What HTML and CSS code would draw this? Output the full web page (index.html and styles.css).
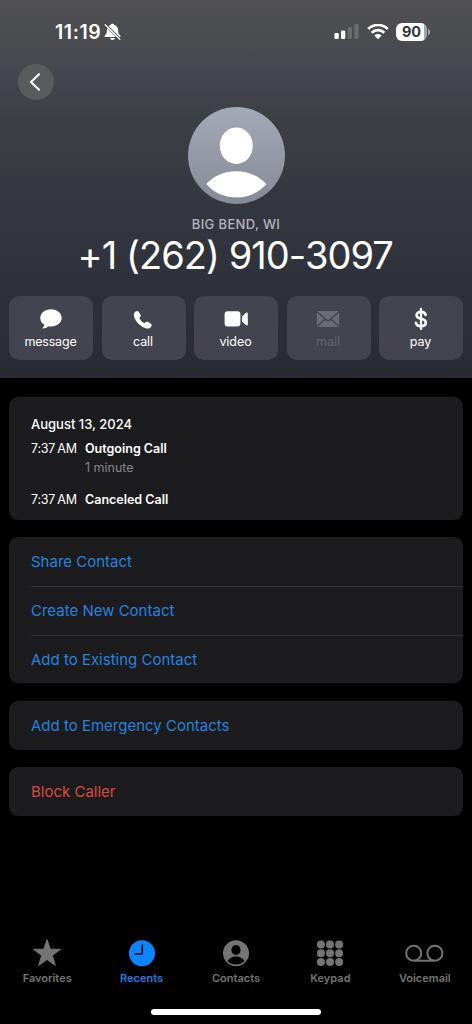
FILE: index.html
```html
<!DOCTYPE html>
<html lang="en">
<head>
<meta charset="utf-8">
<meta name="viewport" content="width=device-width, initial-scale=1">
<title>Contact</title>
<link rel="stylesheet" href="styles.css">
</head>
<body>
<div class="phone">
  <header class="hero">
    <div class="status">
      <div class="status-left">
        <span class="clock">11:19</span>
        <svg class="bell" width="17" height="18" viewBox="0 0 17 18">
          <path fill="#fff" d="M8.500 .7c-1 0-1.700.6-1.900 1.400C4.100 2.900 2.900 4.800 2.900 7.200c0 2.800-.7 3.700-1.700 4.700-.6.600-.8 1-.8 1.400 0 .5.400.8 1 .8h14.200c.6 0 1-.3 1-.8 0-.4-.2-.8-.8-1.400-1-1-1.700-1.900-1.700-4.700 0-2.400-1.200-4.300-3.700-5.100C10.200 1.300 9.500.7 8.500.7zM6 15.100c.3 1.200 1.300 1.900 2.500 1.900s2.200-.7 2.500-1.900z"/>
          <path d="M2.200 1.400L16.400 15.600" stroke="#4b4c51" stroke-width="1.200"/>
          <path d="M1 2.400L15.200 16.600" stroke="#4b4c51" stroke-width="1.200"/>
          <path d="M1.200 1.700L15.900 16.400" stroke="#fff" stroke-width="1.300" stroke-linecap="round"/>
        </svg>
      </div>
      <div class="status-right">
        <svg width="25" height="16" viewBox="0 0 25 16">
          <rect x="0.500" y="9" width="4.300" height="6" rx="1.200" fill="#fff"/>
          <rect x="7" y="6.500" width="4.300" height="8.500" rx="1.200" fill="#fff"/>
          <rect x="13.700" y="3" width="4.300" height="12" rx="1.200" fill="#6b6c70"/>
          <rect x="20.300" y="0" width="4.300" height="15" rx="1.200" fill="#6b6c70"/>
        </svg>
        <svg class="wifi" width="22" height="16" viewBox="0 0 22 16">
          <g fill="none" stroke="#fff" stroke-width="2.700">
            <path d="M1.200 5a13.900 13.900 0 0 1 19.600 0"/>
            <path d="M4.700 8.700a8.900 8.900 0 0 1 12.600 0"/>
          </g>
          <path fill="#fff" d="M11 15.200l-3.600-3.700a5.100 5.100 0 0 1 7.200 0z"/>
        </svg>
        <span class="battery">90</span><i class="battery-cap"></i>
      </div>
    </div>
    <div class="nav">
      <button class="back" aria-label="Back">
        <svg width="12" height="18" viewBox="0 0 12 18"><path d="M10 1.200L2 9l8 7.800" fill="none" stroke="#fff" stroke-width="2" stroke-linecap="round" stroke-linejoin="round"/></svg>
      </button>
    </div>
    <svg class="avatar" width="97" height="97" viewBox="0 0 97 97">
      <defs><linearGradient id="av" x1="0" y1="0" x2="0" y2="1"><stop offset="0" stop-color="#a4a9b8"/><stop offset="1" stop-color="#868a96"/></linearGradient></defs>
      <circle cx="48.500" cy="48.500" r="48.500" fill="url(#av)"/>
      <ellipse cx="48.300" cy="38.700" rx="16.500" ry="18.300" fill="#fff"/>
      <path d="M18.300 77C26 68.800 36.500 64.300 48.300 64.300S70.600 68.800 78.300 77.200C70.500 85.700 60 90.500 48.500 90.500S26 86 18.300 77z" fill="#fff"/>
    </svg>
    <div class="place">BIG BEND, WI</div>
    <h1 class="number">+1 (262) 910-3097</h1>
    <div class="actions">
      <button class="action">
        <svg width="24" height="24" viewBox="0 0 24 24"><path fill="#fff" d="M12 2.300c6 0 10.700 3.800 10.700 8.700S18 19.500 12 19.500c-.9 0-1.700-.1-2.500-.2-1.200 1.100-3.200 2.300-5.500 2.300-.5 0-.6-.5-.3-.8 1-.9 1.600-1.900 1.700-3C2.800 16.300 1.300 13.800 1.300 11 1.300 6.100 6 2.300 12 2.300z"/></svg>
        <span>message</span>
      </button>
      <button class="action">
        <svg width="24" height="24" viewBox="0 0 24 24"><path fill="#fff" d="M3.500 5.700C4.500 4.300 5.900 3.500 7 4.300c.8.600 1.700 2 2.400 3.200.6 1 .5 1.700-.2 2.500-.8.800-.9 1.100-.4 1.900 1 1.600 2.200 2.800 3.800 3.800.8.500 1.200.4 2-.4.700-.7 1.500-.8 2.400-.3 1.300.7 2.500 1.500 3.300 2.300.9 1 .1 2.400-1.100 3.400-1.600 1.300-4 1.100-7-.5-4.300-2.400-7-5.500-8.600-9-1.100-2.400-1-4.200-.1-5.500z"/></svg>
        <span>call</span>
      </button>
      <button class="action">
        <svg width="24" height="24" viewBox="0 0 24 24"><rect x=".6" y="4.300" width="15.800" height="15.200" rx="3" fill="#fff"/><path fill="#fff" d="M18 9.600l3.900-3.700c.9-.8 1.900-.6 1.900.5v11.200c0 1.100-1 1.300-1.900.5L18 14.400z"/></svg>
        <span>video</span>
      </button>
      <button class="action disabled">
        <svg width="24" height="24" viewBox="0 0 24 24"><rect x=".8" y="4" width="22.400" height="16" rx="1.800" fill="#6b6c77"/><path d="M1 4.500l9.300 8.500c1.100 1 2.300 1 3.400 0L23 4.500M1 19.600l8.200-7.500M23 19.600l-8.200-7.500" fill="none" stroke="#434450" stroke-width="1.300"/></svg>
        <span>mail</span>
      </button>
      <button class="action">
        <svg width="24" height="24" viewBox="0 0 24 24"><path d="M12 1.900v20.200" stroke="#fff" stroke-width="2.200" stroke-linecap="round"/><path d="M16.600 7.900C16.100 5.800 14.400 4.800 12 4.800c-2.600 0-4.400 1.400-4.400 3.400 0 2.200 1.700 2.900 4.400 3.600 3 .7 4.800 1.600 4.800 3.800 0 2.300-2 3.600-4.800 3.600-2.700 0-4.600-1.200-5-3.400" fill="none" stroke="#fff" stroke-width="2.700" stroke-linecap="round"/></svg>
        <span>pay</span>
      </button>
    </div>
  </header>

  <main class="content">
    <section class="card log">
      <div class="date">August 13, 2024</div>
      <div class="call"><span class="when">7:37 AM</span><b>Outgoing Call</b></div>
      <div class="duration">1 minute</div>
      <div class="call"><span class="when">7:37 AM</span><b>Canceled Call</b></div>
    </section>
    <section class="card list">
      <a class="row"><span>Share Contact</span></a>
      <a class="row"><span>Create New Contact</span></a>
      <a class="row"><span>Add to Existing Contact</span></a>
    </section>
    <section class="card list"><a class="row"><span>Add to Emergency Contacts</span></a></section>
    <section class="card list"><a class="row danger"><span>Block Caller</span></a></section>
  </main>

  <footer class="footer">
    <nav class="tabs">
      <a class="tab">
        <svg width="40" height="30" viewBox="0 0 40 30"><path fill="#747474" stroke="#747474" stroke-width="1" stroke-linejoin="round" d="M20 1.600l3.300 9.600 10.200.1-8.200 6.200 3 9.900-8.300-5.900-8.300 5.900 3-9.900-8.200-6.200 10.200-.1z"/></svg>
        <span>Favorites</span>
      </a>
      <a class="tab active">
        <svg width="40" height="30" viewBox="0 0 40 30"><circle cx="20" cy="15.300" r="13" fill="#0a84ff"/><path d="M20.300 7v9H13" fill="none" stroke="#000" stroke-width="1.500" stroke-linecap="round" stroke-linejoin="round"/></svg>
        <span>Recents</span>
      </a>
      <a class="tab">
        <svg width="40" height="30" viewBox="0 0 40 30"><circle cx="20" cy="15.300" r="13" fill="#747474"/><ellipse cx="20" cy="12" rx="4.600" ry="5.100" fill="#000"/><path d="M11.500 23.300c1.800-3.200 4.900-4.700 8.500-4.700s6.700 1.500 8.500 4.700c-2.300 2.200-5.300 3.300-8.500 3.300s-6.200-1.100-8.500-3.300z" fill="#000"/></svg>
        <span>Contacts</span>
      </a>
      <a class="tab">
        <svg width="40" height="30" viewBox="0 0 40 30"><g fill="#747474"><circle cx="10.900" cy="6.500" r="4"/><circle cx="20" cy="6.500" r="4"/><circle cx="29.100" cy="6.500" r="4"/><circle cx="10.900" cy="15.300" r="4"/><circle cx="20" cy="15.300" r="4"/><circle cx="29.100" cy="15.300" r="4"/><circle cx="10.900" cy="24.100" r="4"/><circle cx="20" cy="24.100" r="4"/><circle cx="29.100" cy="24.100" r="4"/></g></svg>
        <span>Keypad</span>
      </a>
      <a class="tab">
        <svg width="40" height="30" viewBox="0 0 40 30"><g fill="none" stroke="#747474" stroke-width="2"><circle cx="8.700" cy="15.200" r="7.500"/><circle cx="29.900" cy="15.200" r="7.500"/><path d="M8.700 22.700h21.200"/></g></svg>
        <span>Voicemail</span>
      </a>
    </nav>
    <div class="home"></div>
  </footer>
</div>
</body>
</html>
```
FILE: styles.css
```css
* { box-sizing: border-box; }
body { margin: 0; background: #000; font-family: Inter, "Liberation Sans", sans-serif; color: #fff; }
button { border: 0; padding: 0; font: inherit; color: inherit; }
svg { display: block; flex: none; }
.phone { width: 472px; height: 1024px; display: flex; flex-direction: column; overflow: hidden; background: #000; }

.hero { height: 378px; flex: none; display: flex; flex-direction: column; align-items: center; background: linear-gradient(#505054 0%, #4b4c50 10%, #454750 19%, #3d3f47 32%, #34363f 58%, #292b34 100%); }
.status { width: 100%; height: 64px; padding: 0 42px 0 55px; display: flex; align-items: center; justify-content: space-between; }
.status-left, .status-right { display: flex; align-items: center; }
.clock { font-size: 19.500px; font-weight: 600; letter-spacing: .6px; }
.bell { margin-left: 3px; }
.wifi { margin-left: 8px; }
.battery { margin-left: 7px; width: 31px; height: 18px; border-radius: 6px; background: linear-gradient(90deg, #fff 90%, #a5a6a9 90%); color: #333439; font-size: 14.500px; font-weight: 700; line-height: 18px; text-align: center; }
.battery-cap { width: 2px; height: 6px; margin-left: 1px; border-radius: 0 3px 3px 0; background: #a0a1a4; }
.nav { width: 100%; height: 43px; padding-left: 18px; }
.back { width: 36px; height: 36px; border-radius: 50%; background: #5a5b5f; display: flex; align-items: center; justify-content: center; padding-right: 2px; }
.avatar { flex: none; }
.place { margin-top: 12px; font-size: 13px; line-height: 16px; font-weight: 500; letter-spacing: .35px; color: #b5b6bd; }
.number { margin: 0; font-size: 38px; line-height: 46px; font-weight: 400; letter-spacing: -.95px; padding-right: 1.500px; white-space: nowrap; }
.actions { width: 454px; margin-top: 18px; display: grid; grid-template-columns: repeat(5, 1fr); gap: 8.500px; }
.action { height: 64px; border-radius: 10px; background: #434450; display: flex; flex-direction: column; align-items: center; padding: 11px 1px 0 0; }
.action span { margin-top: 3px; font-size: 12.500px; line-height: 16px; letter-spacing: -.2px; }
.action:not(:first-child) span { letter-spacing: -.05px; }
.action.disabled span { color: #62636e; }

.content { flex: 1; padding: 19px 9px 0; display: flex; flex-direction: column; gap: 17.500px; }
.card { background: #1c1c1e; border-radius: 9px; flex: none; }
.log { height: 122.500px; padding: 18px 22px 0; font-size: 12.500px; line-height: 18px; }
.date { font-size: 13px; font-weight: 500; }
.call { margin-top: 7px; display: flex; }
.when { width: 54px; letter-spacing: -.25px; word-spacing: -1px; }
.call b { font-weight: 600; }
.duration { margin: 1px 0 14px 54px; color: #848488; }
.row { display: block; padding-left: 22px; color: #2783df; font-size: 15px; }
.row span { display: flex; align-items: center; height: 48.800px; }
.row + .row span { border-top: 1px solid #303032; padding-bottom: .800px; }
.row.danger { color: #dc483f; }

.footer { height: 88px; flex: none; display: flex; flex-direction: column; align-items: center; }
.tabs { width: 100%; display: grid; grid-template-columns: repeat(5, 1fr); }
.tab { display: flex; flex-direction: column; align-items: center; color: #747474; font-size: 11px; font-weight: 600; line-height: 14px; padding-top: 2px; }
.tab span { margin-top: 3px; }
.tab.active { color: #1d7ce0; }
.home { width: 170px; height: 6px; margin-top: 24px; border-radius: 3px; background: #fff; }
```
